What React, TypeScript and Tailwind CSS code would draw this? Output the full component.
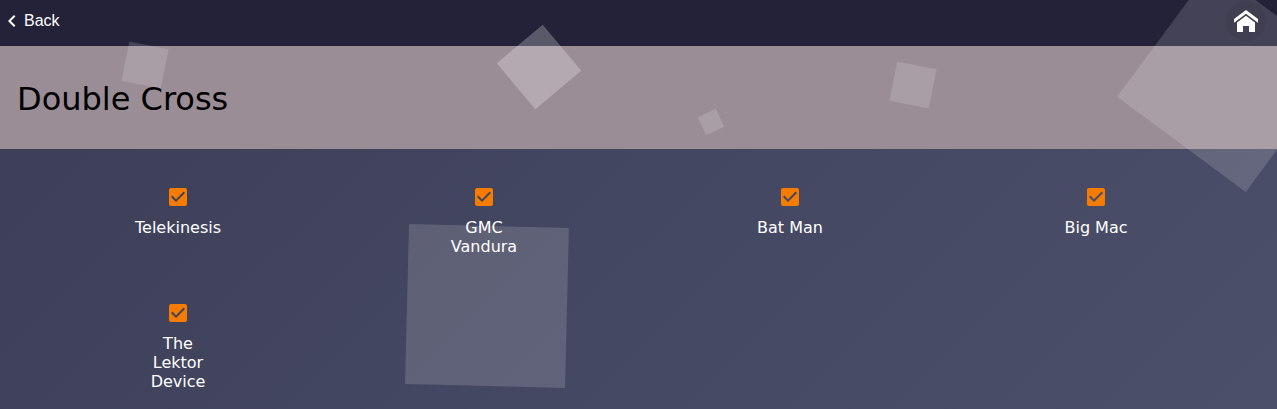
const squares: string[] = [
  'left-[1149px] top-0 size-[160px] rotate-[36.5deg] bg-white/15',
  'left-[509px] top-[37px] size-[60px] rotate-[50deg] bg-white/25',
  'left-[701px] top-[112px] size-[20px] rotate-[65deg] bg-white/15',
  'left-[893px] top-[65px] size-[40px] rotate-[11.3deg] bg-white/15',
  'left-[125px] top-[45px] size-[40px] rotate-[11.3deg] bg-white/15',
  'left-[407px] top-[226px] size-[160px] rotate-[1.4deg] bg-white/15',
];

const items: string[] = ['Telekinesis', 'GMC Vandura', 'Bat Man', 'Big Mac', 'The Lektor Device'];

function CheckedBox() {
  return (
    <svg className="size-6 shrink-0 text-[#f57c00]" viewBox="0 0 24 24" fill="currentColor">
      <path fillRule="evenodd" d="M5 3h14a2 2 0 0 1 2 2v14a2 2 0 0 1-2 2H5a2 2 0 0 1-2-2V5a2 2 0 0 1 2-2zM10 17l9-9-1.41-1.42L10 14.17l-3.59-3.58L5 12z" />
    </svg>
  );
}

export default function App() {
  return (
    <div className="relative h-[409px] w-full overflow-hidden bg-linear-[135deg,#3c3d57,#434660_45%,#4c4f6a] font-['DejaVu_Sans',sans-serif]">
      <header className="flex h-[46px] items-start justify-between bg-[#232239] pr-[11px] text-white">
        <button className="flex h-[42px] items-center font-['Liberation_Sans',sans-serif] text-base">
          <svg className="size-6" viewBox="0 0 24 24" fill="currentColor">
            <path d="M15.41 7.41 14 6l-6 6 6 6 1.41-1.41L10.83 12z" />
          </svg>
          Back
        </button>
        <button className="mt-px flex size-10 items-center justify-center rounded-full bg-black/10">
          <svg className="relative z-10 h-[22px] w-6" viewBox="0 0 24 22" fill="currentColor">
            <path d="M12 0 24 9v3.8L12 3.8 0 12.8V9z" />
            <path d="M12 5.8 21 12.5V22h-6v-6H9v6H3v-9.5z" />
          </svg>
        </button>
      </header>
      <section className="flex h-[103px] items-center bg-[#9b8d96] px-[17px] pt-0.5">
        <h1 className="text-[32px] leading-[38px] text-black">Double Cross</h1>
      </section>
      <ul className="relative z-10 ml-[25px] mr-[28px] grid grid-cols-4 auto-rows-[116px] pt-9 text-white">
        {items.map((item) => (
          <li key={item} className="flex flex-col items-center">
            <CheckedBox />
            <span className="mt-[9px] flex w-[70px] justify-center text-center text-base leading-[19px]">
              {item}
            </span>
          </li>
        ))}
      </ul>
      {squares.map((square) => (
        <div key={square} className={`pointer-events-none absolute ${square}`} />
      ))}
    </div>
  );
}
